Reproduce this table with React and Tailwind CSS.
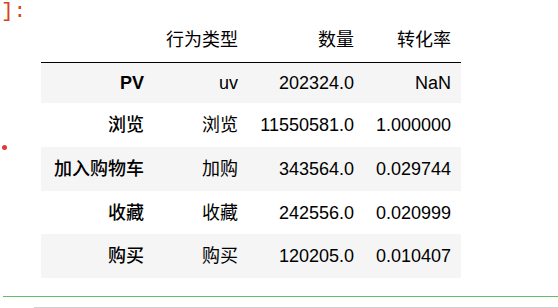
const rows = [
  { idx: 'PV', type: 'uv', count: '202324.0', rate: 'NaN', h: 'h-[41px]', bg: 'bg-[#f5f5f5]' },
  { idx: '浏览', type: '浏览', count: '11550581.0', rate: '1.000000', h: 'h-[44px]', bg: 'bg-white' },
  { idx: '加入购物车', type: '加购', count: '343564.0', rate: '0.029744', h: 'h-[44px]', bg: 'bg-[#f5f5f5]' },
  { idx: '收藏', type: '收藏', count: '242556.0', rate: '0.020999', h: 'h-[43px]', bg: 'bg-white' },
  { idx: '购买', type: '购买', count: '120205.0', rate: '0.010407', h: 'h-[44px]', bg: 'bg-[#f5f5f5]' },
]

export default function App() {
  return (
    <div className="relative flex flex-col w-[558px] h-[308px] overflow-hidden bg-white font-['Liberation_Sans','Noto_Sans_CJK_SC',sans-serif] text-black">
      {/* output prompt tail */}
      <div className="absolute left-[1px] top-[-1px] font-['Liberation_Mono',monospace] text-[21px] leading-[26px] text-[#d84315]">]:</div>
      <div className="absolute left-[2px] top-[145px] w-[5px] h-[5px] rounded-full bg-[#e53935]" />

      <div className="h-[296px] shrink-0 pl-[41px] pt-[18px]">
        <table className="table-fixed border-collapse w-[420px] text-[18px] leading-[22px]">
          <colgroup>
            <col className="w-[113px]" />
            <col className="w-[94px]" />
            <col className="w-[116px]" />
            <col className="w-[97px]" />
          </colgroup>
          <thead>
            <tr className="h-[44px] border-b border-black">
              <th className="pr-[10px] text-right font-normal" />
              <th className="pr-[10px] text-right font-normal">行为类型</th>
              <th className="pr-[10px] text-right font-normal">数量</th>
              <th className="pr-[10px] text-right font-normal">转化率</th>
            </tr>
          </thead>
          <tbody>
            {rows.map(r => (
              <tr key={r.idx} className={`${r.h} ${r.bg}`}>
                <th className={`pr-[10px] text-right whitespace-nowrap ${r.idx === 'PV' ? 'font-bold' : 'font-medium'}`}>{r.idx}</th>
                <td className="pr-[10px] text-right whitespace-nowrap">{r.type}</td>
                <td className="pr-[10px] text-right whitespace-nowrap">{r.count}</td>
                <td className="pr-[10px] text-right whitespace-nowrap">{r.rate}</td>
              </tr>
            ))}
          </tbody>
        </table>
      </div>

      <div className="shrink-0 ml-[3px] h-px bg-[#66bb6a]" />
      <div className="shrink-0 mt-[10px] ml-[34px] h-px bg-[#cfcfcf]" />
    </div>
  )
}
